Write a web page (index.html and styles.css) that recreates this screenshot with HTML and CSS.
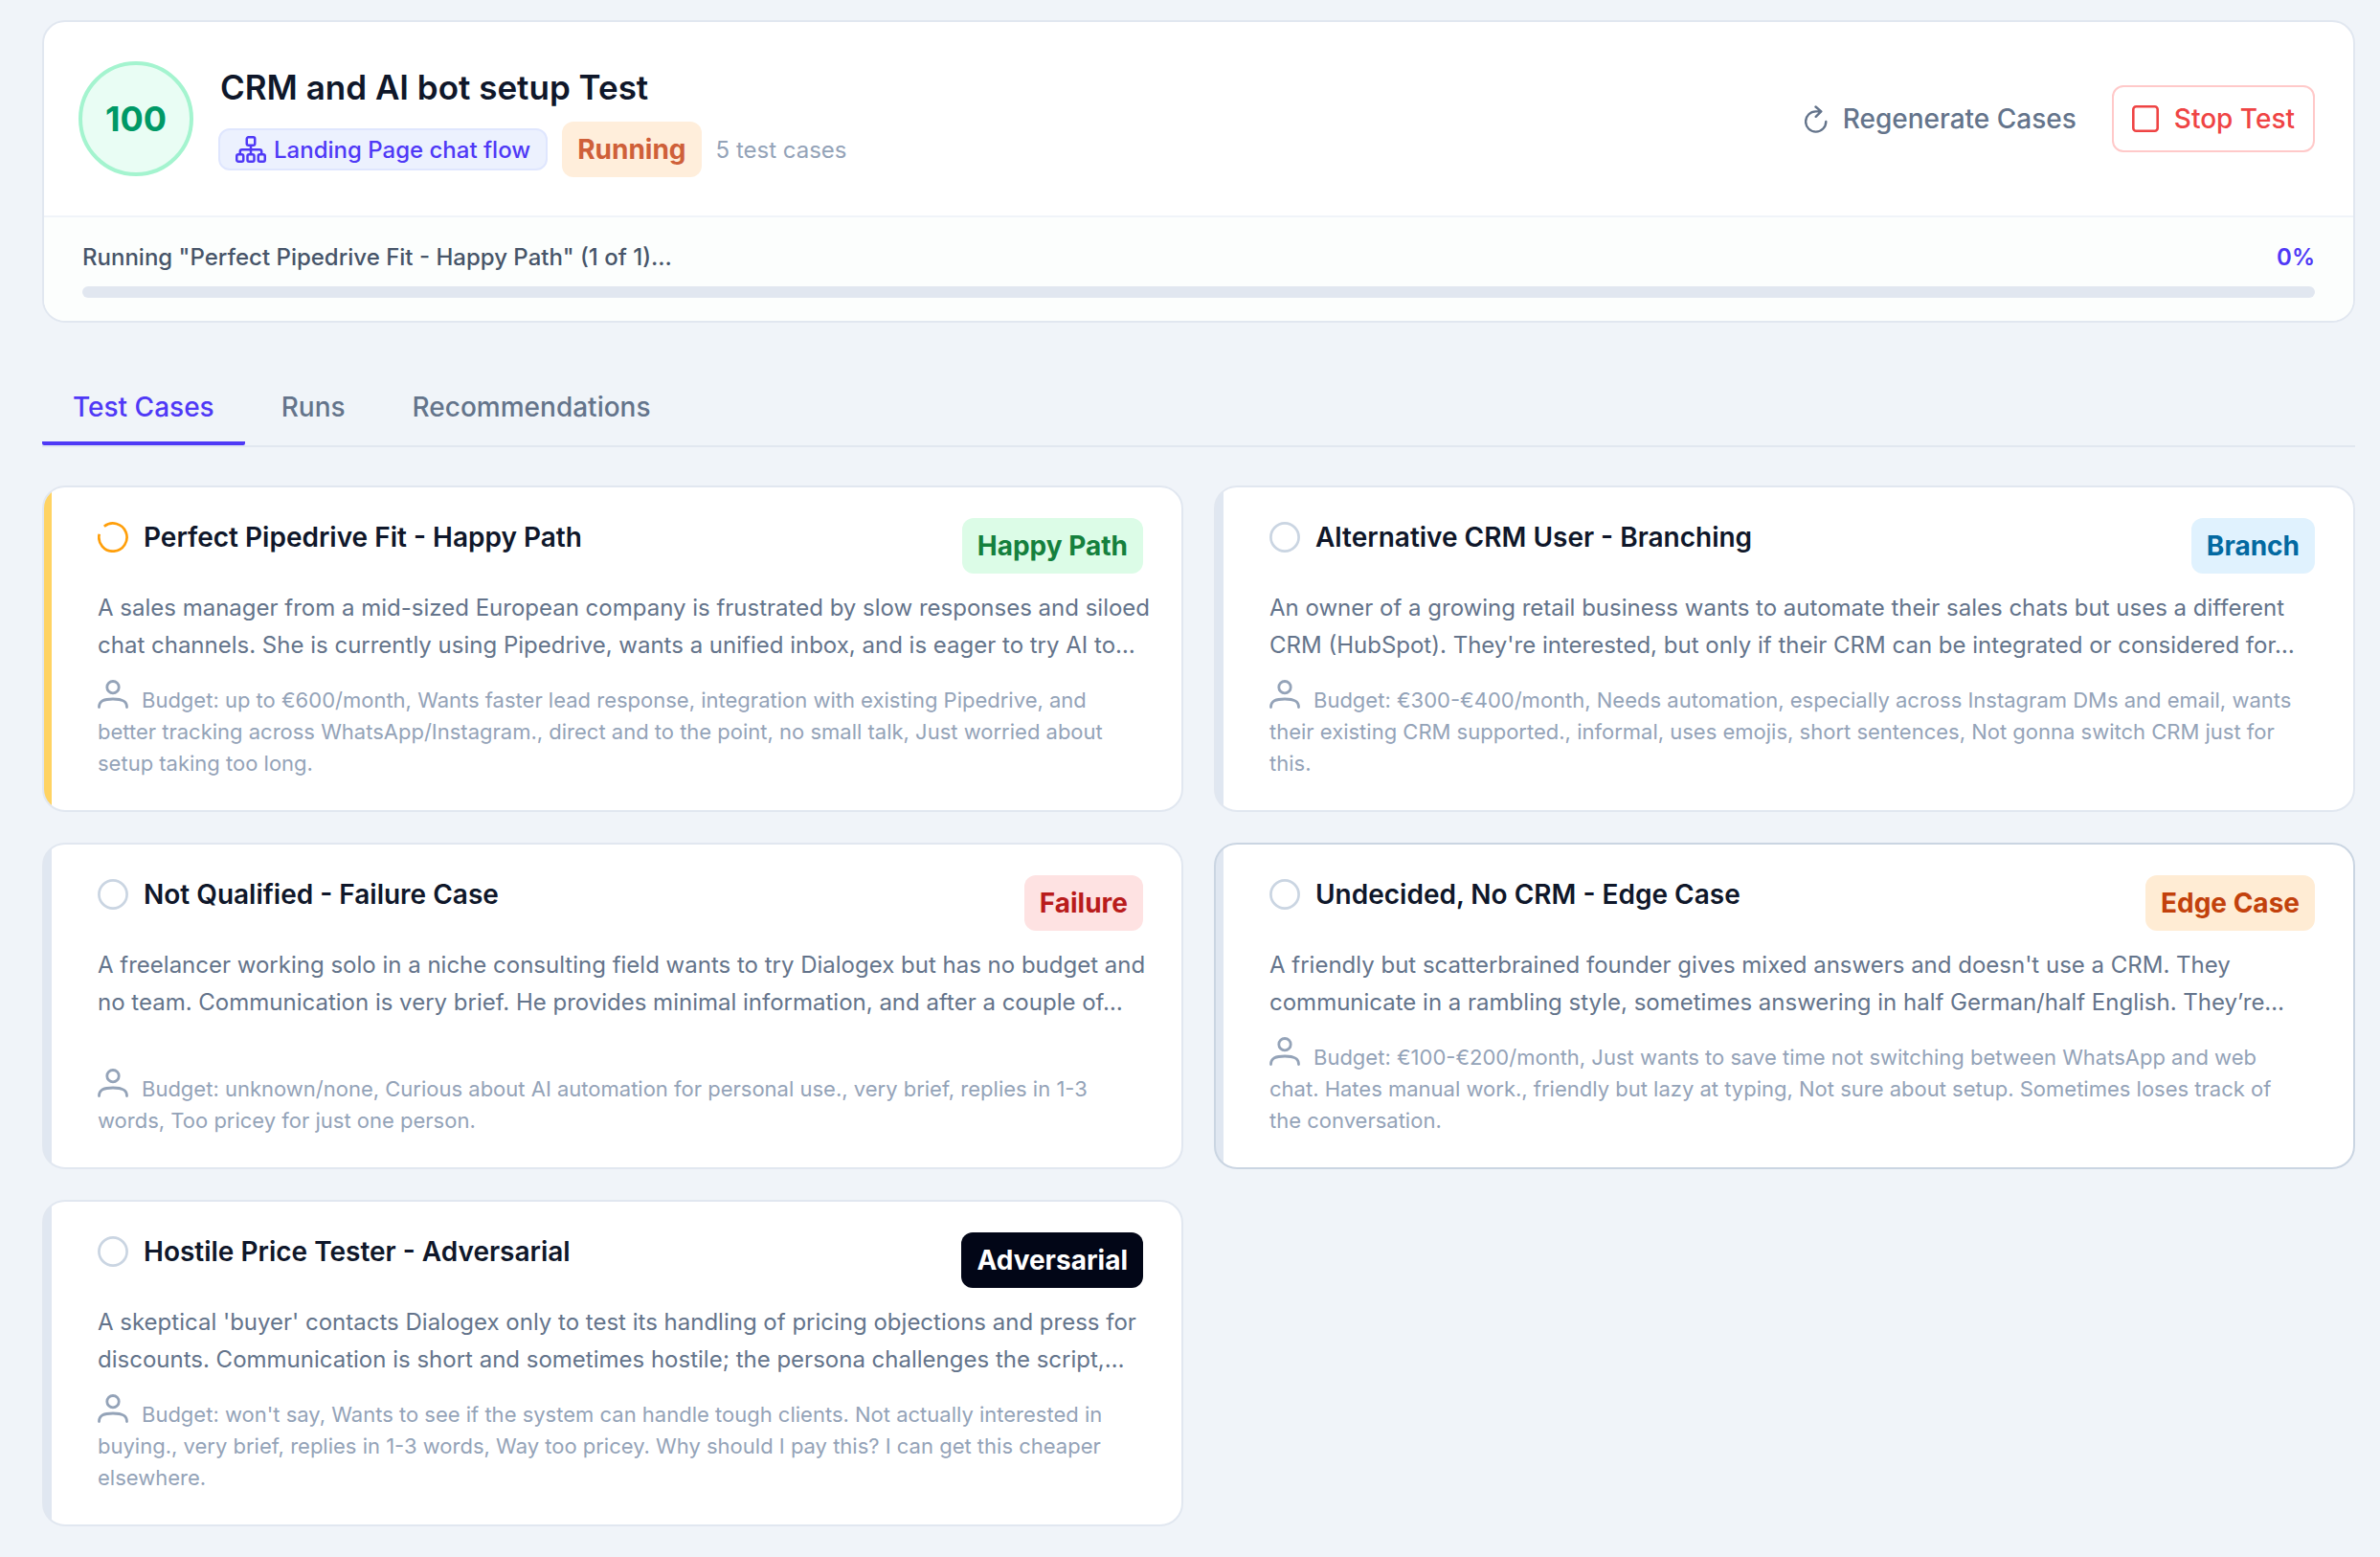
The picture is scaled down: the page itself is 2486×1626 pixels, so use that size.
FILE: index.html
```html
<!DOCTYPE html>
<html lang="en">
<head>
<meta charset="utf-8">
<title>CRM and AI bot setup Test</title>
<link rel="stylesheet" href="styles.css">
</head>
<body>
<svg class="sprite" aria-hidden="true">
  <symbol id="icon-user" viewBox="0 0 32 30"><g fill="none" stroke="currentColor" stroke-width="2.800" stroke-linecap="round"><circle cx="16" cy="7.700" r="6.200"/><path d="M1.500 28.500c0-6.500 5-8.500 14.500-8.500s14.500 2 14.500 8.500"/></g></symbol>
  <symbol id="icon-pending" viewBox="0 0 32 32"><circle cx="16" cy="16" r="14.600" fill="none" stroke="currentColor" stroke-width="2.700"/></symbol>
</svg>
<main class="page">
  <section class="summary">
    <header class="summary-head">
      <div class="score">100</div>
      <div class="summary-info">
        <h1 class="title">CRM and AI bot setup Test</h1>
        <div class="meta">
          <a class="flow" href="#flow">
            <svg class="flow-icon" viewBox="0 0 32 28" fill="none" stroke="currentColor" stroke-width="2.500" stroke-linejoin="round"><rect x="11.750" y="1.250" width="8.500" height="8.500" rx="1.800"/><rect x="1.250" y="19.250" width="7" height="7.500" rx="1.800"/><rect x="12.500" y="19.250" width="7" height="7.500" rx="1.800"/><rect x="23.750" y="19.250" width="7" height="7.500" rx="1.800"/><path d="M16 9.700v9.500M4.800 19.200v-3a2 2 0 0 1 2-2h18.400a2 2 0 0 1 2 2v3"/></svg>
            Landing Page chat flow
          </a>
          <span class="badge badge-running">Running</span>
          <span class="count">5 test cases</span>
        </div>
      </div>
      <div class="actions">
        <button class="btn btn-plain" type="button">
          <svg class="regen-icon" viewBox="0 0 24 29" fill="none" stroke="currentColor" stroke-width="2.400" stroke-linecap="round" stroke-linejoin="round"><path d="M22.300 17a10.600 10.600 0 1 1-10.600-10.600h5.400M11.500 1.500l5.800 4.900-5.600 5.400"/></svg>
          Regenerate Cases
        </button>
        <button class="btn btn-stop" type="button">
          <svg class="stop-icon" viewBox="0 0 28 28" fill="none" stroke="currentColor" stroke-width="2.600"><rect x="1.300" y="1.300" width="25.400" height="25.400" rx="3"/></svg>
          Stop Test
        </button>
      </div>
    </header>
    <div class="progress-panel">
      <div class="progress-row">
        <label for="run-progress">Running "Perfect Pipedrive Fit - Happy Path" (1 of 1)...</label>
        <span class="percent">0%</span>
      </div>
      <progress class="progress" id="run-progress" value="0" max="100"></progress>
    </div>
  </section>

  <nav class="tabs">
    <button class="tab tab-active" type="button">Test Cases</button>
    <button class="tab" type="button">Runs</button>
    <button class="tab" type="button">Recommendations</button>
  </nav>

  <section class="cases">
    <article class="case case-running">
      <header class="case-head">
        <svg class="status status-running" viewBox="0 0 32 32"><path d="M6.800 4.700A14.600 14.600 0 1 1 1.700 12.800" fill="none" stroke="currentColor" stroke-width="2.700"/></svg>
        <h2 class="case-title">Perfect Pipedrive Fit - Happy Path</h2>
        <span class="badge badge-happy">Happy Path</span>
      </header>
      <p class="desc">A sales manager from a mid-sized European company is frustrated by slow responses and siloed<br>chat channels. She is currently using Pipedrive, wants a unified inbox, and is eager to try AI to…</p>
      <p class="persona"><svg class="user"><use href="#icon-user"/></svg>Budget: up to €600/month, Wants faster lead response, integration with existing Pipedrive, and<br>better tracking across WhatsApp/Instagram., direct and to the point, no small talk, Just worried about<br>setup taking too long.</p>
    </article>
    <article class="case">
      <header class="case-head">
        <svg class="status"><use href="#icon-pending"/></svg>
        <h2 class="case-title">Alternative CRM User - Branching</h2>
        <span class="badge badge-branch">Branch</span>
      </header>
      <p class="desc">An owner of a growing retail business wants to automate their sales chats but uses a different<br>CRM (HubSpot). They're interested, but only if their CRM can be integrated or considered for…</p>
      <p class="persona"><svg class="user"><use href="#icon-user"/></svg>Budget: €300-€400/month, Needs automation, especially across Instagram DMs and email, wants<br>their existing CRM supported., informal, uses emojis, short sentences, Not gonna switch CRM just for<br>this.</p>
    </article>
    <article class="case">
      <header class="case-head">
        <svg class="status"><use href="#icon-pending"/></svg>
        <h2 class="case-title">Not Qualified - Failure Case</h2>
        <span class="badge badge-failure">Failure</span>
      </header>
      <p class="desc">A freelancer working solo in a niche consulting field wants to try Dialogex but has no budget and<br>no team. Communication is very brief. He provides minimal information, and after a couple of…</p>
      <p class="persona"><svg class="user"><use href="#icon-user"/></svg>Budget: unknown/none, Curious about AI automation for personal use., very brief, replies in 1-3<br>words, Too pricey for just one person.</p>
    </article>
    <article class="case case-hover">
      <header class="case-head">
        <svg class="status"><use href="#icon-pending"/></svg>
        <h2 class="case-title">Undecided, No CRM - Edge Case</h2>
        <span class="badge badge-edge">Edge Case</span>
      </header>
      <p class="desc">A friendly but scatterbrained founder gives mixed answers and doesn't use a CRM. They<br>communicate in a rambling style, sometimes answering in half German/half English. They’re…</p>
      <p class="persona"><svg class="user"><use href="#icon-user"/></svg>Budget: €100-€200/month, Just wants to save time not switching between WhatsApp and web<br>chat. Hates manual work., friendly but lazy at typing, Not sure about setup. Sometimes loses track of<br>the conversation.</p>
    </article>
    <article class="case">
      <header class="case-head">
        <svg class="status"><use href="#icon-pending"/></svg>
        <h2 class="case-title">Hostile Price Tester - Adversarial</h2>
        <span class="badge badge-adversarial">Adversarial</span>
      </header>
      <p class="desc">A skeptical 'buyer' contacts Dialogex only to test its handling of pricing objections and press for<br>discounts. Communication is short and sometimes hostile; the persona challenges the script,…</p>
      <p class="persona"><svg class="user"><use href="#icon-user"/></svg>Budget: won't say, Wants to see if the system can handle tough clients. Not actually interested in<br>buying., very brief, replies in 1-3 words, Way too pricey. Why should I pay this? I can get this cheaper<br>elsewhere.</p>
    </article>
  </section>
</main>
</body>
</html>
```
FILE: styles.css
```css
* { box-sizing: border-box; }
body {
  margin: 0;
  background: #f0f4f9;
  color: #0f172a;
  font-family: Inter, "Liberation Sans", sans-serif;
}
h1, h2, p { margin: 0; }
button { font: inherit; cursor: pointer; }
svg { flex: none; }
.sprite { position: absolute; width: 0; height: 0; }
.page { padding: 21px 26px 32px 44px; }

.summary {
  background: #fff;
  border: 2px solid #e1e7f0;
  border-radius: 24px;
  overflow: hidden;
}
.summary-head {
  display: flex;
  align-items: center;
  gap: 26px;
  padding: 40px 40px 40px 36px;
}
.score {
  display: grid;
  place-items: center;
  flex: none;
  width: 120px;
  height: 120px;
  border: 4px solid #a4f4cf;
  border-radius: 50%;
  background: #e9fdf4;
  color: #009966;
  font-size: 36px;
  font-weight: 700;
}
.summary-info { flex: 1; }
.title { padding-left: 2px; font-size: 35px; font-weight: 600; line-height: 56px; }
.meta { display: flex; align-items: center; gap: 15px; margin-top: 8px; }
.flow {
  display: flex;
  align-items: center;
  gap: 8px;
  height: 44px;
  padding: 0 16px;
  border: 2px solid #dfe6fe;
  border-radius: 12px;
  background: #ecf1fe;
  color: #4f39f6;
  font-size: 24px;
  font-weight: 500;
  text-decoration: none;
}
.flow-icon { width: 32px; height: 28px; }
.badge {
  padding: 0 16px;
  border-radius: 12px;
  font-size: 28px;
  font-weight: 700;
  line-height: 58px;
}
.badge-running { background: #ffeedb; color: #cf6039; }
.badge-happy { background: #dcfce7; color: #15803d; }
.badge-branch { background: #e0f2fe; color: #0369a1; }
.badge-failure { background: #fee2e2; color: #b91c1c; }
.badge-edge { background: #ffecd4; color: #c2410c; }
.badge-adversarial { background: #020617; color: #fff; }
.count { color: #94a3b8; font-size: 24px; }
.actions { display: flex; gap: 16px; }
.btn {
  display: flex;
  align-items: center;
  gap: 16px;
  height: 70px;
  padding: 0 19px;
  border: 2px solid transparent;
  border-radius: 12px;
  background: none;
  font-size: 28px;
  font-weight: 500;
}
.btn-plain { color: #64748b; }
.btn-stop { border-color: #ffc9c9; color: #ef4444; }
.regen-icon { width: 24px; height: 29px; }
.stop-icon { width: 28px; height: 28px; }

.progress-panel {
  padding: 24px 40px;
  border-top: 2px solid #f0f4f9;
  background: #fcfefd;
}
.progress-row {
  display: flex;
  justify-content: space-between;
  color: #475569;
  font-size: 24px;
  font-weight: 500;
  line-height: 36px;
}
.percent { color: #4f39f6; font-weight: 600; }
.progress {
  display: block;
  appearance: none;
  width: 100%;
  height: 12px;
  margin-top: 12px;
  border: 0;
  border-radius: 6px;
  overflow: hidden;
  background: #e1e7f0;
}
.progress::-webkit-progress-bar { background: #e1e7f0; }
.progress::-webkit-progress-value { background: #4f39f6; }

.tabs {
  display: flex;
  gap: 6px;
  margin-top: 48px;
  border-bottom: 2px solid #e1e7f0;
}
.tab {
  height: 80px;
  padding: 4px 32px 0;
  border: 0;
  border-bottom: 4px solid transparent;
  border-radius: 2px;
  background: none;
  color: #64748b;
  font-size: 28px;
  font-weight: 500;
}
.tab-active { border-color: #4f39f6; color: #4f39f6; }

.cases {
  display: grid;
  grid-template-columns: repeat(2, minmax(0, 1fr));
  gap: 32px;
  margin-top: 40px;
}
.case {
  display: flex;
  flex-direction: column;
  min-height: 341px;
  padding: 32px 40px 32px 56px;
  border: 2px solid #e1e7f0;
  border-radius: 24px;
  background: linear-gradient(to right, #e0e7f1 8px, #fff 8px);
}
.case-running { background: linear-gradient(to right, #ffd363 8px, #fff 8px); }
.case-hover { border-color: #cad5e2; }
.case-head { display: flex; align-items: flex-start; }
.status { width: 32px; height: 32px; margin: 4px 16px 0 0; color: #cad5e2; }
.status-running { color: #ff9f0a; }
.case-title { flex: 1; font-size: 28px; font-weight: 600; line-height: 40px; }
.desc { margin-top: 16px; color: #64748b; font-size: 24px; line-height: 39px; white-space: nowrap; }
.persona { margin-top: auto; color: #94a3b8; font-size: 22px; line-height: 33px; }
.user { width: 32px; height: 30px; margin-right: 14px; vertical-align: -1px; }
```
